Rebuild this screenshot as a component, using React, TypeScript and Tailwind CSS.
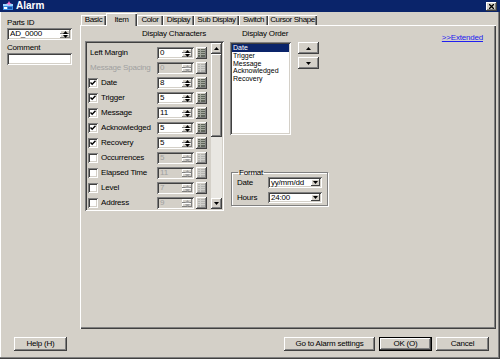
const raised =
  "shadow-[inset_-1px_-1px_#404040,inset_1px_1px_#ffffff,inset_-2px_-2px_#808080,inset_2px_2px_#d4d0c8]";
const sunken =
  "shadow-[inset_1px_1px_#808080,inset_-1px_-1px_#ffffff,inset_2px_2px_#404040,inset_-2px_-2px_#d4d0c8]";

type Row = { label: string; value: string; check?: boolean; checked?: boolean; dim?: boolean; grayLabel?: boolean };

const rows: Row[] = [
  { label: "Left Margin", value: "0" },
  { label: "Message Spacing", value: "0", dim: true, grayLabel: true },
  { label: "Date", value: "8", check: true, checked: true },
  { label: "Trigger", value: "5", check: true, checked: true },
  { label: "Message", value: "11", check: true, checked: true },
  { label: "Acknowledged", value: "5", check: true, checked: true },
  { label: "Recovery", value: "5", check: true, checked: true },
  { label: "Occurrences", value: "5", check: true, dim: true },
  { label: "Elapsed Time", value: "11", check: true, dim: true },
  { label: "Level", value: "7", check: true, dim: true },
  { label: "Address", value: "9", check: true, dim: true },
];

const tabs = [
  { name: "Basic", w: "w-[25px]" },
  { name: "Item", w: "w-[31px]", active: true },
  { name: "Color", w: "w-[26px]" },
  { name: "Display", w: "w-[31px]" },
  { name: "Sub Display", w: "w-[45px]" },
  { name: "Switch", w: "w-[29px]" },
  { name: "Cursor Shape", w: "w-[49px]" },
];

function Arrow({ dir, color = "#000000" }: { dir: "up" | "down"; color?: string }) {
  return (
    <svg width="5" height="3" viewBox="0 0 5 3">
      <path d={dir === "up" ? "M2.5 0L5 3H0z" : "M0 0H5L2.5 3z"} fill={color} />
    </svg>
  );
}

function Spin({ dim }: { dim?: boolean }) {
  const c = dim ? "#a0a0a0" : "#000000";
  return (
    <div className="w-[10px] h-full flex flex-col bg-[#d4d0c8]">
      <div className="flex-1 flex items-center justify-center shadow-[inset_-1px_-1px_#808080,inset_1px_1px_#ffffff]">
        <Arrow dir="up" color={c} />
      </div>
      <div className="flex-1 flex items-center justify-center shadow-[inset_-1px_-1px_#808080,inset_1px_1px_#ffffff]">
        <Arrow dir="down" color={c} />
      </div>
    </div>
  );
}

function GridButton({ dim }: { dim?: boolean }) {
  const fill = dim ? "#b4b4b0" : "#60665c";
  const line = dim ? "#d0d0cc" : "#a4a89e";
  return (
    <div className={`ml-[2px] w-[11px] h-[12px] bg-[#d4d0c8] flex items-center justify-center ${raised}`}>
      <svg width="7" height="8" viewBox="0 0 7 8">
        <rect width="7" height="8" fill={fill} />
        {[1.5, 3.5, 5.5].map((y) => (
          <line key={y} x1="0" y1={y} x2="7" y2={y} stroke={line} strokeWidth="1" />
        ))}
        <line x1="2.5" y1="0" x2="2.5" y2="8" stroke={line} strokeWidth="1" />
      </svg>
    </div>
  );
}

function Check({ on }: { on?: boolean }) {
  return (
    <div className={`w-[10px] h-[10px] bg-white flex items-center justify-center ${sunken}`}>
      {on && (
        <svg width="6" height="6" viewBox="0 0 6 6">
          <path d="M0.5 2.5L2.2 4.3L5.5 0.8" stroke="#000000" strokeWidth="1.4" fill="none" />
        </svg>
      )}
    </div>
  );
}

function CharRow({ r }: { r: Row }) {
  return (
    <div className="h-[12px] flex items-center whitespace-nowrap">
      <div className="w-[69px] flex items-center">
        {r.check ? (
          <>
            <Check on={r.checked} />
            <span className="ml-[3px] leading-none">{r.label}</span>
          </>
        ) : (
          <span className={`ml-[2px] leading-none ${r.grayLabel ? "text-[#a0a0a0]" : "text-black"}`}>{r.label}</span>
        )}
      </div>
      <div className={`w-[37px] h-[12px] p-[2px] flex ${r.dim ? "bg-[#d4d0c8]" : "bg-white"} ${sunken}`}>
        <span className={`flex-1 pl-[1px] leading-[8px] ${r.dim ? "text-[#a0a0a0]" : "text-black"}`}>{r.value}</span>
        <Spin dim={r.dim} />
      </div>
      <GridButton dim={r.dim} />
    </div>
  );
}

function Select({ value }: { value: string }) {
  return (
    <div className={`w-[54px] h-[11px] p-[2px] flex bg-white ${sunken}`}>
      <span className="flex-1 pl-[1px] leading-[7px]">{value}</span>
      <div className="w-[9px] h-full bg-[#d4d0c8] flex items-center justify-center shadow-[inset_-1px_-1px_#404040,inset_1px_1px_#ffffff]">
        <Arrow dir="down" />
      </div>
    </div>
  );
}

function Button({ label, w, def }: { label: string; w: string; def?: boolean }) {
  return (
    <div
      className={`${w} h-[14px] bg-[#d4d0c8] flex items-center justify-center leading-none ${
        def
          ? "shadow-[inset_0_0_0_1px_#000000,inset_-2px_-2px_#404040,inset_2px_2px_#ffffff,inset_-3px_-3px_#808080]"
          : raised
      }`}
    >
      {label}
    </div>
  );
}

export default function App() {
  return (
    <div className="w-[500px] h-[359px] bg-[#d4d0c8] flex flex-col text-[8px] tracking-[-0.2px] text-black font-['Liberation_Sans',Arial,sans-serif] shadow-[inset_-1px_-1px_#404040,inset_-2px_-2px_#808080,inset_1px_1px_#ffffff]">
      {/* title bar */}
      <div className="h-[12px] bg-[#0a246a] flex items-center pl-[2px] pr-[3px]">
        <svg width="12" height="10" viewBox="0 0 12 10">
          <rect x="1" y="3" width="10" height="6" fill="#3c8ee0" />
          <rect x="1" y="3" width="10" height="2" fill="#9fd6ff" />
          <rect x="2" y="6" width="3" height="2" fill="#ffffff" />
          <rect x="6" y="6" width="4" height="2" fill="#1b4fa8" />
          <path d="M7 0L8 2L10 2.5L8 3L7 5L6 3L4 2.5L6 2z" fill="#ff7ad0" />
        </svg>
        <span className="ml-[2px] text-white font-bold text-[10px] tracking-normal leading-none">Alarm</span>
        <div className={`ml-auto w-[11px] h-[9px] bg-[#d4d0c8] flex items-center justify-center ${raised}`}>
          <svg width="5" height="5" viewBox="0 0 5 5">
            <path d="M0 0L5 5M5 0L0 5" stroke="#000000" strokeWidth="1.3" />
          </svg>
        </div>
      </div>

      <div className="flex">
        {/* left column */}
        <div className="w-[80px] pl-[7px] pt-[6px] flex flex-col">
          <div className="h-[10px] leading-[10px]">Parts ID</div>
          <div className={`w-[65px] h-[12px] p-[2px] flex bg-white ${sunken}`}>
            <span className="flex-1 pl-[1px] leading-[8px]">AD_0000</span>
            <Spin />
          </div>
          <div className="mt-[3px] h-[10px] leading-[10px]">Comment</div>
          <div className={`w-[65px] h-[12px] bg-white ${sunken}`} />
        </div>

        {/* tabs */}
        <div className="w-[416px] pt-[1px] flex flex-col">
          <div className="h-[12px] pl-[1px] flex items-end whitespace-nowrap tracking-[-0.4px]">
            {tabs.map((t) => (
              <div
                key={t.name}
                className={`${t.w} flex items-center justify-center leading-none bg-[#d4d0c8] shadow-[inset_1px_1px_#ffffff,inset_-1px_0_#404040,inset_-2px_0_#808080] ${
                  t.active ? "h-[13px] -mb-[1px] relative z-10" : "h-[10px]"
                }`}
              >
                {t.name}
              </div>
            ))}
          </div>
          <div className="h-[304px] flex pl-[5px] pt-[4px] shadow-[inset_1px_1px_#ffffff,inset_-1px_-1px_#404040,inset_-2px_-2px_#808080]">
            {/* display characters */}
            <div className="w-[139px] flex flex-col">
              <div className="h-[12px] pl-[57px] leading-[9px] whitespace-nowrap">Display Characters</div>
              <div className={`h-[170px] p-[2px] flex ${sunken}`}>
                <div className="flex-1 pt-[4px] pl-[1px] flex flex-col gap-[3px]">
                  {rows.map((r) => (
                    <CharRow key={r.label} r={r} />
                  ))}
                </div>
                <div className="w-[11px] flex flex-col">
                  <div className={`h-[11px] bg-[#d4d0c8] flex items-center justify-center ${raised}`}>
                    <Arrow dir="up" />
                  </div>
                  <div className={`h-[83px] bg-[#d4d0c8] ${raised}`} />
                  <div className="flex-1 bg-[#e9e7e2]" />
                  <div className={`h-[11px] bg-[#d4d0c8] flex items-center justify-center ${raised}`}>
                    <Arrow dir="down" />
                  </div>
                </div>
              </div>
            </div>

            {/* display order */}
            <div className="ml-[6px] w-[90px] flex flex-col">
              <div className="h-[13px] pl-[12px] leading-[9px] whitespace-nowrap">Display Order</div>
              <div className="flex">
                <div
                  className={`w-[61px] h-[93px] bg-white p-[2px] flex flex-col text-[7px] tracking-normal leading-[7.7px] ${sunken}`}
                >
                  <div className="bg-[#0a246a] text-white pl-[1px] h-[8px] leading-[8px]">Date</div>
                  <div className="pl-[1px]">Trigger</div>
                  <div className="pl-[1px]">Message</div>
                  <div className="pl-[1px]">Acknowledged</div>
                  <div className="pl-[1px]">Recovery</div>
                </div>
                <div className="ml-[7px] flex flex-col gap-[3px]">
                  <div className={`w-[21px] h-[12px] bg-[#d4d0c8] flex items-center justify-center ${raised}`}>
                    <Arrow dir="up" />
                  </div>
                  <div className={`w-[21px] h-[12px] bg-[#d4d0c8] flex items-center justify-center ${raised}`}>
                    <Arrow dir="down" />
                  </div>
                </div>
              </div>
              <fieldset className="mt-[33px] ml-[1px] w-[94px] h-[38px] border border-[#808080] shadow-[1px_1px_#ffffff,inset_1px_1px_#ffffff] px-[5px]">
                <legend className="ml-[1px] px-[1px] leading-[9px]">Format</legend>
                <div className="flex flex-col gap-[4px]">
                  <div className="flex items-center">
                    <span className="w-[31px] leading-none">Date</span>
                    <Select value="yy/mm/dd" />
                  </div>
                  <div className="flex items-center">
                    <span className="w-[31px] leading-none">Hours</span>
                    <Select value="24:00" />
                  </div>
                </div>
              </fieldset>
            </div>

            <div className="flex-1 pr-[13px] pt-[3px] text-right">
              <span className="underline text-[#2020f0] leading-none">&gt;&gt;Extended</span>
            </div>
          </div>
        </div>
      </div>

      {/* bottom buttons */}
      <div className="mt-[8px] pl-[14px] pr-[11px] flex items-center">
        <Button label="Help (H)" w="w-[53px]" />
        <div className="ml-auto flex gap-[4px]">
          <Button label="Go to Alarm settings" w="w-[91px]" />
          <Button label="OK (O)" w="w-[53px]" def />
          <Button label="Cancel" w="w-[53px]" />
        </div>
      </div>
    </div>
  );
}
